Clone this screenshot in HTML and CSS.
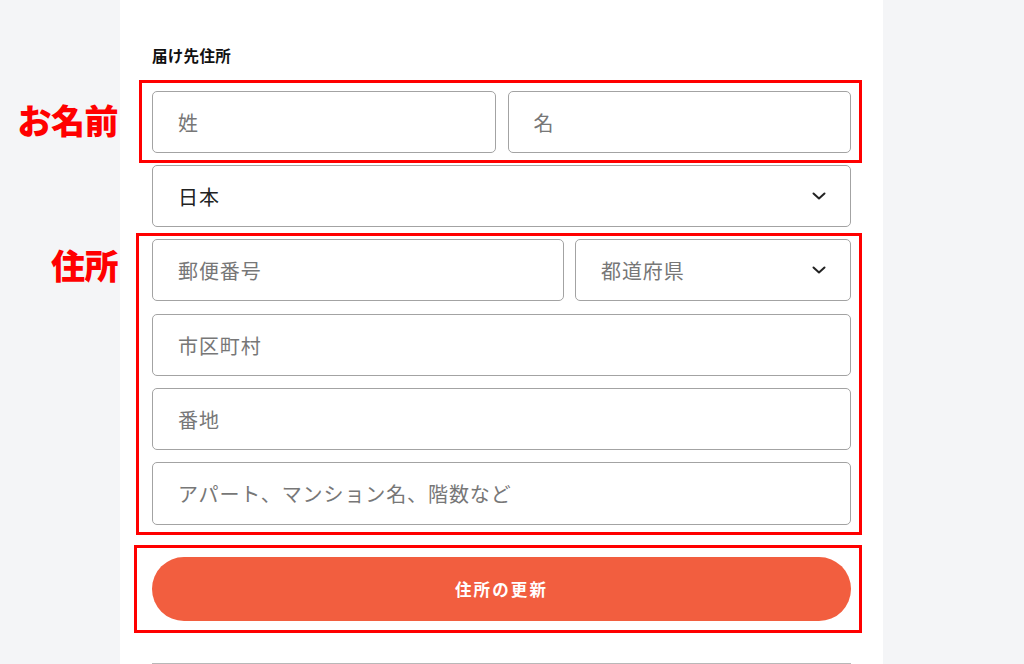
FILE: index.html
```html
<!DOCTYPE html>
<html lang="ja">
<head>
<meta charset="utf-8">
<title>届け先住所</title>
<link rel="stylesheet" href="styles.css">
</head>
<body>
<div class="page">
  <aside class="side"></aside>
  <main class="panel">
    <h2 class="title">届け先住所</h2>
    <div class="form">
      <div class="group group-name">
        <div class="row row-name">
          <div class="field placeholder">姓</div>
          <div class="field placeholder">名</div>
        </div>
        <div class="frame frame-name"></div>
        <span class="note note-name">お名前</span>
      </div>

      <div class="field select">
        <span>日本</span>
        <svg class="chev" width="14" height="8" viewBox="0 0 14 8"><path d="M1.5 1.5 L7 6.5 L12.5 1.5" fill="none" stroke="#222" stroke-width="2" stroke-linecap="round" stroke-linejoin="round"/></svg>
      </div>

      <div class="group group-addr">
        <div class="row row-zip">
          <div class="field placeholder">郵便番号</div>
          <div class="field select placeholder">
            <span>都道府県</span>
            <svg class="chev" width="14" height="8" viewBox="0 0 14 8"><path d="M1.5 1.5 L7 6.5 L12.5 1.5" fill="none" stroke="#222" stroke-width="2" stroke-linecap="round" stroke-linejoin="round"/></svg>
          </div>
        </div>
        <div class="field placeholder">市区町村</div>
        <div class="field placeholder">番地</div>
        <div class="field placeholder field-last">アパート、マンション名、階数など</div>
        <div class="frame frame-addr"></div>
        <span class="note note-addr">住所</span>
      </div>

      <div class="group group-btn">
        <button class="submit" type="button">住所の更新</button>
        <div class="frame frame-btn"></div>
      </div>

      <div class="divider"></div>
    </div>
  </main>
  <aside class="side"></aside>
</div>
</body>
</html>
```

FILE: styles.css
```css
* { box-sizing: border-box; }

html, body {
  margin: 0;
  padding: 0;
  height: 664px;
  overflow: hidden;
  background: #f4f5f7;
  font-family: "Noto Sans CJK JP", "Noto Sans", sans-serif;
}

.page {
  display: grid;
  grid-template-columns: 120px 763px 1fr;
  height: 664px;
}

.side { background: #f4f5f7; }

.panel {
  background: #ffffff;
  padding: 44px 32px 0 32px;
}

.title {
  margin: 0 0 25px 0;
  font-size: 15.5px;
  line-height: 22px;
  font-weight: 700;
  letter-spacing: 0.3px;
  color: #111;
}

.form {
  display: flex;
  flex-direction: column;
  gap: 12px;
}

.group {
  position: relative;
  display: flex;
  flex-direction: column;
  gap: 12px;
}

.row {
  display: grid;
  gap: 12px;
}

.row-name { grid-template-columns: 1fr 1fr; }
.row-zip { grid-template-columns: 412px 1fr; gap: 11px; margin-bottom: 1px; }

.field {
  height: 62px;
  border: 1px solid #a3a3a3;
  border-radius: 5px;
  background: #fff;
  display: flex;
  align-items: center;
  padding: 0 24px 0 25px;
  font-size: 20px;
  letter-spacing: 0.9px;
  color: #222;
}

.field-last { height: 63px; }

.field.placeholder { color: #777; }

.select { justify-content: space-between; }

.chev { flex: none; }

.frame {
  position: absolute;
  border: 3px solid #ff0000;
  pointer-events: none;
}

.frame-name { top: -11px; bottom: -10px; left: -13px; right: -11px; }
.frame-addr { top: -6px; bottom: -10px; left: -16px; right: -11px; }
.frame-btn { top: -12px; bottom: -12px; left: -18px; right: -11px; }

.note {
  position: absolute;
  right: calc(100% + 34px);
  font-size: 34px;
  line-height: 34px;
  font-weight: 900;
  color: #ff0000;
  white-space: nowrap;
  letter-spacing: -0.5px;
}

.note-name { top: 12px; }
.note-addr { top: 9px; }

.group-btn { margin-top: 20px; }

.submit {
  height: 64px;
  border: none;
  border-radius: 32px;
  background: #f25e3f;
  color: #fff;
  font-family: "Noto Sans CJK JP", "Noto Sans", sans-serif;
  font-size: 16.5px;
  font-weight: 700;
  letter-spacing: 0.13em;
}

.divider {
  margin-top: 30px;
  border-top: 1px solid #b8b8b8;
}
```
